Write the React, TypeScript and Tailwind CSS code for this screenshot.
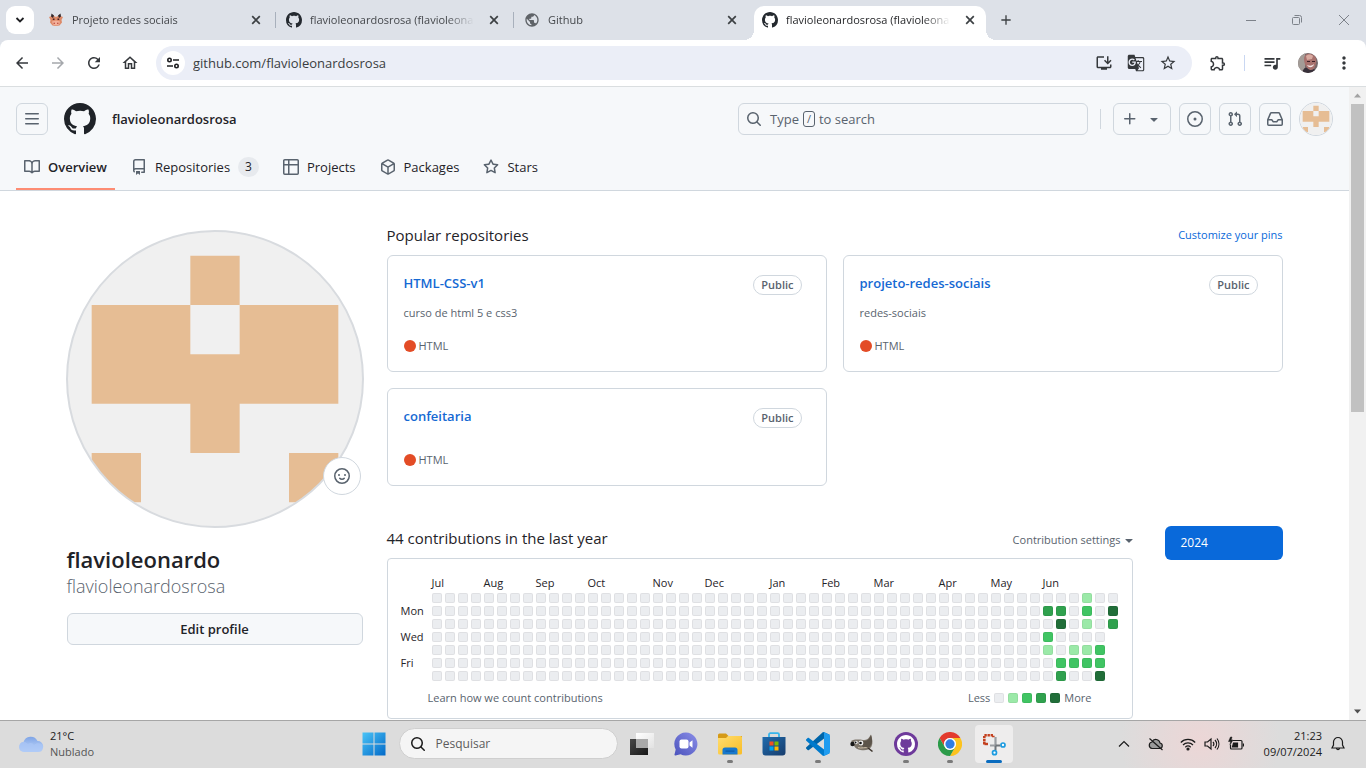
import type { ReactNode } from 'react';
import {
  MdAdd,
  MdArrowBack,
  MdArrowForward,
  MdGTranslate,
  MdMoreVert,
  MdOutlineExtension,
  MdOutlineHome,
  MdOutlineInstallDesktop,
  MdPublic,
  MdQueueMusic,
  MdRefresh,
  MdStarOutline,
} from 'react-icons/md';

/* ---------- Icons ---------- */

const iconPaths = {
  mark: 'M8 0c4.42 0 8 3.58 8 8a8.013 8.013 0 0 1-5.45 7.59c-.4.08-.55-.17-.55-.38 0-.27.01-1.13.01-2.2 0-.75-.25-1.23-.54-1.48 1.78-.2 3.65-.88 3.65-3.95 0-.88-.31-1.59-.82-2.15.08-.2.36-1.02-.08-2.12 0 0-.67-.22-2.2.82-.64-.18-1.32-.27-2-.27-.68 0-1.36.09-2 .27-1.53-1.03-2.2-.82-2.2-.82-.44 1.1-.16 1.92-.08 2.12-.51.56-.82 1.28-.82 2.15 0 3.06 1.86 3.75 3.64 3.95-.23.2-.44.55-.51 1.07-.46.21-1.61.55-2.33-.66-.15-.24-.6-.83-1.23-.82-.67.01-.27.38.01.53.34.19.73.9.82 1.13.16.45.68 1.31 2.69.94 0 .67.01 1.3.01 1.49 0 .21-.15.45-.55.38A7.995 7.995 0 0 1 0 8c0-4.42 3.58-8 8-8Z',
  bars: 'M1 2.75A.75.75 0 0 1 1.75 2h12.5a.75.75 0 0 1 0 1.5H1.75A.75.75 0 0 1 1 2.75Zm0 5A.75.75 0 0 1 1.75 7h12.5a.75.75 0 0 1 0 1.5H1.75A.75.75 0 0 1 1 7.75ZM1.75 12h12.5a.75.75 0 0 1 0 1.5H1.75a.75.75 0 0 1 0-1.5Z',
  book: 'M0 1.75A.75.75 0 0 1 .75 1h4.253c1.227 0 2.317.59 3 1.501A3.743 3.743 0 0 1 11.006 1h4.245a.75.75 0 0 1 .75.75v10.5a.75.75 0 0 1-.75.75h-4.507a2.25 2.25 0 0 0-1.591.659l-.622.621a.75.75 0 0 1-1.06 0l-.622-.621A2.25 2.25 0 0 0 5.258 13H.75a.75.75 0 0 1-.75-.75Zm7.251 10.324.004-5.073-.002-2.253A2.25 2.25 0 0 0 5.003 2.5H1.5v9h3.757a3.75 3.75 0 0 1 1.994.574ZM8.755 4.75l-.004 7.322a3.752 3.752 0 0 1 1.992-.572H14.5v-9h-3.495a2.25 2.25 0 0 0-2.25 2.25Z',
  repo: 'M2 2.5A2.5 2.5 0 0 1 4.5 0h8.75a.75.75 0 0 1 .75.75v12.5a.75.75 0 0 1-.75.75h-2.5a.75.75 0 0 1 0-1.5h1.75v-2h-8a1 1 0 0 0-.714 1.7.75.75 0 1 1-1.072 1.05A2.495 2.495 0 0 1 2 11.5Zm10.5-1h-8a1 1 0 0 0-1 1v6.708A2.486 2.486 0 0 1 4.5 9h8ZM5 12.25a.25.25 0 0 1 .25-.25h3.5a.25.25 0 0 1 .25.25v3.25a.25.25 0 0 1-.4.2l-1.45-1.087a.249.249 0 0 0-.3 0L5.4 15.7a.25.25 0 0 1-.4-.2Z',
  table: 'M0 1.75C0 .784.784 0 1.75 0h12.5C15.216 0 16 .784 16 1.75v12.5A1.75 1.75 0 0 1 14.25 16H1.75A1.75 1.75 0 0 1 0 14.25ZM6.5 6.5v8h7.75a.25.25 0 0 0 .25-.25V6.5Zm8-1.5V1.75a.25.25 0 0 0-.25-.25H6.5V5Zm-13 1.5v7.75c0 .138.112.25.25.25H5v-8ZM5 5V1.5H1.75a.25.25 0 0 0-.25.25V5Z',
  package: 'm8.878.392 5.25 3.045c.54.314.872.89.872 1.514v6.098a1.75 1.75 0 0 1-.872 1.514l-5.25 3.045a1.75 1.75 0 0 1-1.756 0l-5.25-3.045A1.75 1.75 0 0 1 1 11.049V4.951c0-.624.332-1.201.872-1.514L7.122.392a1.75 1.75 0 0 1 1.756 0ZM7.875 1.69l-4.63 2.685L8 7.133l4.755-2.758-4.63-2.685a.248.248 0 0 0-.25 0ZM2.5 5.677v5.372c0 .09.047.171.125.216l4.625 2.683V8.432Zm6.25 8.271 4.625-2.683a.25.25 0 0 0 .125-.216V5.677L8.75 8.432Z',
  star: 'M8 .25a.75.75 0 0 1 .673.418l1.882 3.815 4.21.612a.75.75 0 0 1 .416 1.279l-3.046 2.97.719 4.192a.751.751 0 0 1-1.088.791L8 12.347l-3.766 1.98a.75.75 0 0 1-1.088-.79l.72-4.194L.818 6.374a.75.75 0 0 1 .416-1.28l4.21-.611L7.327.668A.75.75 0 0 1 8 .25Zm0 2.445L6.615 5.5a.75.75 0 0 1-.564.41l-3.097.45 2.24 2.184a.75.75 0 0 1 .216.664l-.528 3.084 2.769-1.456a.75.75 0 0 1 .698 0l2.77 1.456-.53-3.084a.75.75 0 0 1 .216-.664l2.24-2.183-3.096-.45a.75.75 0 0 1-.564-.41L8 2.694Z',
  search: 'M10.68 11.74a6 6 0 0 1-7.922-8.982 6 6 0 0 1 8.982 7.922l3.04 3.04a.749.749 0 0 1-.326 1.275.749.749 0 0 1-.734-.215ZM11.5 7a4.499 4.499 0 1 0-8.997 0A4.499 4.499 0 0 0 11.5 7Z',
  plus: 'M7.75 2a.75.75 0 0 1 .75.75V7h4.25a.75.75 0 0 1 0 1.5H8.5v4.25a.75.75 0 0 1-1.5 0V8.5H2.75a.75.75 0 0 1 0-1.5H7V2.75A.75.75 0 0 1 7.75 2Z',
  caret: 'M4.427 7.427l3.396 3.396a.25.25 0 0 0 .354 0l3.396-3.396A.25.25 0 0 0 11.396 7H4.604a.25.25 0 0 0-.177.427Z',
  issue: 'M8 9.5a1.5 1.5 0 1 0 0-3 1.5 1.5 0 0 0 0 3ZM8 0a8 8 0 1 1 0 16A8 8 0 0 1 8 0ZM1.5 8a6.5 6.5 0 1 0 13 0 6.5 6.5 0 0 0-13 0Z',
  pull: 'M1.5 3.25a2.25 2.25 0 1 1 3 2.122v5.256a2.251 2.251 0 1 1-1.5 0V5.372A2.25 2.25 0 0 1 1.5 3.25Zm5.677-.177L9.573.677A.25.25 0 0 1 10 .854V2.5h1A2.5 2.5 0 0 1 13.5 5v5.628a2.251 2.251 0 1 1-1.5 0V5a1 1 0 0 0-1-1h-1v1.646a.25.25 0 0 1-.427.177L7.177 3.427a.25.25 0 0 1 0-.354ZM3.75 2.5a.75.75 0 1 0 0 1.5.75.75 0 0 0 0-1.5Zm0 9.5a.75.75 0 1 0 0 1.5.75.75 0 0 0 0-1.5Zm8.25.75a.75.75 0 1 0 1.5 0 .75.75 0 0 0-1.5 0Z',
  inbox: 'M2.8 2.06A1.75 1.75 0 0 1 4.41 1h7.18c.7 0 1.333.417 1.61 1.06l2.74 6.395c.04.093.06.194.06.295v4.5A1.75 1.75 0 0 1 14.25 15H1.75A1.75 1.75 0 0 1 0 13.25v-4.5c0-.101.02-.202.06-.295Zm1.61.44a.25.25 0 0 0-.23.152L1.887 8H4.75a.75.75 0 0 1 .6.3L6.625 10h2.75l1.275-1.7a.75.75 0 0 1 .6-.3h2.863L11.82 2.652a.25.25 0 0 0-.23-.152Zm10.09 7h-2.875l-1.275 1.7a.75.75 0 0 1-.6.3h-3.5a.75.75 0 0 1-.6-.3L4.375 9.5H1.5v3.75c0 .138.112.25.25.25h12.5a.25.25 0 0 0 .25-.25Z',
};

type IconName = keyof typeof iconPaths;

function Icon({ name, className = 'size-4' }: { name: IconName; className?: string }) {
  return (
    <svg viewBox="0 0 16 16" className={className} fill="currentColor" aria-hidden="true">
      <path d={iconPaths[name]} />
    </svg>
  );
}

function SmileyIcon() {
  return (
    <svg viewBox="0 0 16 16" className="size-4" fill="none" stroke="currentColor" strokeWidth="1.5" strokeLinecap="round" aria-hidden="true">
      <circle cx="8" cy="8" r="7.25" />
      <path d="M5.75 10.25c1 1.350 3.500 1.350 4.500 0" />
      <circle cx="5" cy="7" r="1" fill="currentColor" stroke="none" />
      <circle cx="11" cy="7" r="1" fill="currentColor" stroke="none" />
    </svg>
  );
}

/* ---------- Browser ---------- */

function BullIcon() {
  return (
    <svg viewBox="0 0 16 16" className="size-4" aria-hidden="true">
      <path d="M1 5l4-1.500L8 5l3-1.500L15 5l-1.500 3 .5 2.500-2.500 3L8 14l-3.500-.5L2 10.500 2.500 8z" fill="#dd8a68" />
      <path d="M4 9.500l4-1 4 1-1 3-3 1-3-1z" fill="#f3b09a" />
      <path d="M3.500 1.500l2.500 2L5 6 3 4.500zM12.500 1.500l-2.500 2L11 6l2-1.500z" fill="#33272a" />
      <path d="M4.800 6.500h1.700V8H4.800zM9.500 6.500h1.700V8H9.500z" fill="#4a2020" />
      <path d="M5.500 10.800h1.500v1H5.500zM9 10.800h1.500v1H9z" fill="#b5392f" />
    </svg>
  );
}

type TabInfo = { title: string; icon: ReactNode; active?: boolean; divider?: boolean };

const tabs: TabInfo[] = [
  { title: 'Projeto redes sociais', icon: <BullIcon />, divider: true },
  {
    title: 'flavioleonardosrosa (flavioleona',
    icon: <Icon name="mark" className="size-4 text-[#24292f]" />,
    divider: true,
  },
  { title: 'Github', icon: <MdPublic className="size-4 text-[#5f6368]" /> },
  {
    title: 'flavioleonardosrosa (flavioleona',
    icon: <Icon name="mark" className="size-4 text-[#24292f]" />,
    active: true,
  },
];

function Tab({ tab }: { tab: TabInfo }) {
  const look = tab.active
    ? 'bg-white text-[#1f2023] before:absolute before:bottom-0 before:-left-2.5 before:size-2.5 before:bg-[radial-gradient(circle_at_0_0,transparent_10px,#fff_10px)] after:absolute after:bottom-0 after:-right-2.5 after:size-2.5 after:bg-[radial-gradient(circle_at_100%_0,transparent_10px,#fff_10px)]'
    : 'text-[#44474b]';
  return (
    <div className={`relative mr-1.5 flex h-[34px] w-[232px] items-center gap-2 rounded-t-[10px] pr-[11px] pb-1.5 pl-2 ${look}`}>
      {tab.icon}
      <span className="min-w-0 flex-1 overflow-hidden text-[11px] leading-4 whitespace-nowrap [mask-image:linear-gradient(to_right,#000_80%,transparent_96%)]">
        {tab.title}
      </span>
      <button aria-label="Fechar guia" className="text-[#3c4043]">
        <svg viewBox="0 0 10 10" className="size-2.5" stroke="currentColor" strokeWidth="1.7" fill="none"><path d="M1.200 1.200l7.600 7.600M8.800 1.200L1.200 8.800" /></svg>
      </button>
      {tab.divider && <span className="absolute top-1.5 -right-1 h-4 w-px bg-[#a8b0bc]" />}
    </div>
  );
}

function TabStrip() {
  return (
    <div className="flex h-10 shrink-0 items-end bg-[#dde1e8]">
      <button aria-label="Pesquisar guias" className="mr-1.5 mb-1.5 ml-1.5 flex size-7 items-center justify-center rounded-[9px] bg-white">
        <svg viewBox="0 0 10 10" className="size-2.5" stroke="#1f2023" strokeWidth="1.8" fill="none"><path d="M1.500 3l3.500 3.500L8.500 3" /></svg>
      </button>
      {tabs.map((tab, i) => (
        <Tab key={i} tab={tab} />
      ))}
      <button aria-label="Nova guia" className="mb-3 ml-1.5 text-[#3c4043]">
        <MdAdd className="size-4" />
      </button>
      <div className="mr-4 mb-3.5 ml-auto flex items-center gap-9 text-[#7d828a]">
        <button aria-label="Minimizar">
          <svg viewBox="0 0 10 10" className="size-2.5" stroke="currentColor" fill="none"><path d="M0 5.500h10" /></svg>
        </button>
        <button aria-label="Restaurar">
          <svg viewBox="0 0 10 10" className="size-2.5" stroke="currentColor" fill="none"><rect x=".5" y="2.5" width="7" height="7" rx="1" /><path d="M2.500.5h5a2 2 0 0 1 2 2v5" /></svg>
        </button>
        <button aria-label="Fechar">
          <svg viewBox="0 0 12 12" className="size-3" stroke="currentColor" fill="none"><path d="M1 1l10 10M11 1L1 11" /></svg>
        </button>
      </div>
    </div>
  );
}

function SiteSettingsIcon() {
  return (
    <svg viewBox="0 0 14 14" className="size-3.5" fill="none" stroke="#1f2023" strokeWidth="1.6" aria-hidden="true">
      <circle cx="3.5" cy="4" r="1.7" />
      <path d="M7 4h6M1 10h6" />
      <circle cx="10.5" cy="10" r="1.7" />
    </svg>
  );
}

function ProfilePhoto() {
  return (
    <svg viewBox="0 0 20 20" className="size-5 rounded-full" aria-hidden="true">
      <rect width="20" height="20" fill="#75686a" />
      <path d="M0 0h7v20H0z" fill="#a39c97" />
      <path d="M6 6c0-4 3-6 7-5s6 4 5 9-3 8-6 7-6-6-6-11z" fill="#a8716d" />
      <path d="M8 3c2-2 5-2 7 0l-1 3-5 1z" fill="#d8aaa0" />
      <path d="M9 8h3v1H9zM14 8h3v1h-3z" fill="#3d2027" />
      <path d="M9 12c3 1 5 1 7-1 0 3-5 5-7 1z" fill="#f2e6e4" />
      <path d="M4 20c1-4 3-6 5-5 3 3 5 2 7 1l4 4z" fill="#38303a" />
    </svg>
  );
}

function Toolbar() {
  return (
    <div className="shrink-0 bg-[#dde1e8]">
      <div className="flex h-[47px] items-center rounded-t-lg border-b border-[#dadee0] bg-white text-[#35383c]">
        <div className="flex items-center gap-[18px] pr-[17px] pl-[13px]">
          <button aria-label="Voltar"><MdArrowBack className="size-[18px]" /></button>
          <button aria-label="Avançar" className="text-[#a5a8ac]"><MdArrowForward className="size-[18px]" /></button>
          <button aria-label="Recarregar"><MdRefresh className="size-[18px]" /></button>
          <button aria-label="Página inicial"><MdOutlineHome className="size-[18px]" /></button>
        </div>
        <div className="flex h-[34px] flex-1 items-center rounded-full bg-[#ebeef7] pr-[15px] pl-[5px]">
          <button aria-label="Ver informações do site" className="flex size-6 items-center justify-center rounded-full bg-white">
            <SiteSettingsIcon />
          </button>
          <input
            aria-label="Barra de endereço"
            defaultValue="github.com/flavioleonardosrosa"
            className="ml-2 min-w-0 flex-1 bg-transparent text-[13px] leading-5 text-[#3a3d41] outline-none"
          />
          <div className="flex items-center gap-[14px]">
            <button aria-label="Instalar"><MdOutlineInstallDesktop className="size-[18px]" /></button>
            <button aria-label="Traduzir"><MdGTranslate className="size-[18px]" /></button>
            <button aria-label="Favoritar"><MdStarOutline className="size-[18px]" /></button>
          </div>
        </div>
        <div className="flex items-center pr-3 pl-[17px]">
          <button aria-label="Extensões"><MdOutlineExtension className="size-[18px]" /></button>
          <span className="mx-[17px] h-4 w-px bg-[#c9d7f2]" />
          <button aria-label="Mídia"><MdQueueMusic className="size-5" /></button>
          <button aria-label="Perfil" className="ml-4"><ProfilePhoto /></button>
          <button aria-label="Menu" className="ml-4"><MdMoreVert className="size-5" /></button>
        </div>
      </div>
    </div>
  );
}

/* ---------- GitHub ---------- */

function Identicon({ className }: { className: string }) {
  return (
    <svg viewBox="0 0 420 420" className={className} role="img" aria-label="flavioleonardosrosa">
      <rect width="420" height="420" fill="#f0f0f0" />
      <path
        fill="#e6bd94"
        d="M175 35h70v70h-70zM35 105h140v70h70v-70h140v140H245v70h-70v-70H35zM35 315h70v70H35zM315 315h70v70h-70z"
      />
    </svg>
  );
}

const iconButton = 'flex size-8 items-center justify-center rounded-md border border-[#d0d7de] text-[#59636e]';

type NavItem = { label: string; icon: IconName; active?: boolean; count?: number };

const navItems: NavItem[] = [
  { label: 'Overview', icon: 'book', active: true },
  { label: 'Repositories', icon: 'repo', count: 3 },
  { label: 'Projects', icon: 'table' },
  { label: 'Packages', icon: 'package' },
  { label: 'Stars', icon: 'star' },
];

function SiteHeader() {
  return (
    <header className="border-b border-[#d0d7de] bg-[#f6f8fa]">
      <div className="flex items-center px-4 pt-[15px]">
        <button aria-label="Open menu" className={iconButton}><Icon name="bars" /></button>
        <Icon name="mark" className="ml-4 size-8 text-[#1f2328]" />
        <a href="#profile" className="ml-4 text-[13px] leading-5 font-semibold text-[#1f2328]">flavioleonardosrosa</a>
        <button className="ml-auto flex h-8 w-[350px] items-center rounded-md border border-[#d0d7de] px-[7px] text-[13px] leading-5 text-[#59636e]">
          <Icon name="search" className="mr-2 size-4" />
          Type
          <kbd className="mx-1 flex h-4 w-3 items-center justify-center rounded-[3px] border border-[#59636e] font-[inherit] text-[11px]">/</kbd>
          to search
        </button>
        <span className="mx-3 h-5 w-px bg-[#d0d7de]" />
        <div className="flex items-center gap-2">
          <button aria-label="Create new" className="flex h-8 w-[58px] items-center justify-center gap-2 rounded-md border border-[#d0d7de] text-[#59636e]">
            <Icon name="plus" />
            <Icon name="caret" />
          </button>
          <button aria-label="Issues" className={iconButton}><Icon name="issue" /></button>
          <button aria-label="Pull requests" className={iconButton}><Icon name="pull" /></button>
          <button aria-label="Inbox" className={iconButton}><Icon name="inbox" /></button>
          <button aria-label="Account"><Identicon className="size-[34px] rounded-full border border-[#d0d7de]" /></button>
        </div>
      </div>
      <nav className="flex gap-2 px-4 pt-[15px]">
        {navItems.map(({ label, icon, active, count }) => (
          <a
            key={label}
            href={`#${label.toLowerCase()}`}
            className={`flex items-start gap-2 border-b-2 px-2 pt-1.5 pb-[11px] text-[13px] leading-5 text-[#1f2328] ${active ? 'border-[#fd8c73] font-semibold' : 'border-transparent'}`}
          >
            <Icon name={icon} className="mt-0.5 size-4 text-[#59636e]" />
            {label}
            {count && <span className="rounded-full bg-[#e7eaee] px-[7px] text-[12px] font-medium">{count}</span>}
          </a>
        ))}
      </nav>
    </header>
  );
}

function ProfileCard() {
  return (
    <aside className="w-[296px] shrink-0">
      <div className="relative">
        <Identicon className="aspect-square w-full rounded-full outline-2 -outline-offset-1 outline-[#d8dbdf]" />
        <button aria-label="Set status" className="absolute right-0.5 bottom-8 flex size-[38px] items-center justify-center rounded-full border border-[#d0d7de] bg-white text-[#59636e]">
          <SmileyIcon />
        </button>
      </div>
      <h1 className="mt-[17px]">
        <span className="block text-[22px] leading-[30px] font-semibold text-[#1f2328]">flavioleonardo</span>
        <span className="block text-[18px] leading-6 font-light text-[#59636e]">flavioleonardosrosa</span>
      </h1>
      <button className="mt-[15px] h-8 w-full rounded-md border border-[#d0d7de] bg-[#f6f8fa] text-[13px] leading-5 font-semibold text-[#1f2328]">
        Edit profile
      </button>
    </aside>
  );
}

const repos = [
  { name: 'HTML-CSS-v1', description: 'curso de html 5 e css3' },
  { name: 'projeto-redes-sociais', description: 'redes-sociais' },
  { name: 'confeitaria', description: '' },
];

function RepoCard({ name, description }: { name: string; description: string }) {
  return (
    <li className="self-start rounded-md border border-[#d0d7de] py-[17px] pr-6 pl-4">
      <div className="flex h-[22px] justify-between">
        <a href={`#${name}`} className="text-[13px] leading-5 font-semibold text-[#1569d3]">{name}</a>
        <span className="self-end rounded-full border border-[#d0d7de] px-[7px] text-[11px] leading-[18px] font-semibold text-[#59636e]">Public</span>
      </div>
      {description && <p className="mt-2.5 -mb-[7px] text-[11px] leading-4 text-[#59636e]">{description}</p>}
      <p className="mt-6 flex items-center gap-[3px] text-[11px] leading-4 text-[#59636e]">
        <span className="size-3 rounded-full bg-[#e34c26]" />
        HTML
      </p>
    </li>
  );
}

const months: [string, number][] = [
  ['Jul', 4], ['Aug', 4], ['Sep', 4], ['Oct', 5], ['Nov', 4], ['Dec', 5],
  ['Jan', 4], ['Feb', 4], ['Mar', 5], ['Apr', 4], ['May', 4], ['Jun', 6],
];

const levelColors = ['bg-[#ebedf0]', 'bg-[#9be9a8]', 'bg-[#40c463]', 'bg-[#30a14e]', 'bg-[#216e39]'];

/* Levels of the last six weeks, one row per weekday; -1 marks days to come. */
const recentWeeks = [
  [0, 0, 0, 1, 0, 0],
  [3, 3, 0, 2, 0, 4],
  [0, 4, 0, 1, 0, 3],
  [2, 0, 0, 0, 0, -1],
  [1, 0, 1, 1, 2, -1],
  [0, 2, 2, 2, 2, -1],
  [0, 3, 0, 0, 4, -1],
];
const quietWeeks = Array<number>(47).fill(0);
const dayLabels = ['', 'Mon', '', 'Wed', '', 'Fri', ''];

function Cell({ level }: { level: number }) {
  return <span className={`block size-2.5 rounded-[2px] border border-black/5 ${levelColors[level]}`} />;
}

function ContributionCalendar() {
  return (
    <div className="rounded-[4px] border border-[#d0d7de] pt-[13px] pb-3 pl-2.5">
      <table className="table-fixed border-separate border-spacing-[3px] text-[11px] leading-[10px] text-[#1f2328]">
        <colgroup>
          <col className="w-7" />
          {Array.from({ length: 53 }, (_, i) => <col key={i} className="w-2.5" />)}
        </colgroup>
        <thead>
          <tr className="h-[15px]">
            <td className="p-0" />
            {months.map(([name, span]) => (
              <th key={name} colSpan={span} className="p-0 text-left font-normal">{name}</th>
            ))}
          </tr>
        </thead>
        <tbody>
          {recentWeeks.map((recent, day) => (
            <tr key={day} className="h-2.5">
              <th className="max-w-7 p-0 text-left font-normal">{dayLabels[day]}</th>
              {[...quietWeeks, ...recent].map((level, week) => (
                <td key={week} className="p-0">{level >= 0 && <Cell level={level} />}</td>
              ))}
            </tr>
          ))}
        </tbody>
      </table>
      <div className="mt-1.5 flex justify-between pr-10 pl-[30px] text-[11px] leading-4 text-[#59636e]">
        <a href="#learn">Learn how we count contributions</a>
        <div className="flex items-center gap-1">
          Less
          {levelColors.map((_, level) => <Cell key={level} level={level} />)}
          More
        </div>
      </div>
    </div>
  );
}

function ProfilePage() {
  return (
    <main className="mx-auto flex max-w-[1280px] gap-6 px-8 pt-10">
      <ProfileCard />
      <div className="min-w-0 flex-1">
        <section>
          <div className="-mt-1 flex items-center justify-between">
            <h2 className="text-[15px] leading-4 text-[#1f2328]">Popular repositories</h2>
            <a href="#pins" className="text-[11px] leading-4 text-[#0969da]">Customize your pins</a>
          </div>
          <ol className="mt-3 grid grid-cols-2 gap-4">
            {repos.map((repo) => <RepoCard key={repo.name} {...repo} />)}
          </ol>
        </section>
        <div className="mt-10 flex items-start gap-8">
          <section className="min-w-0 flex-1">
            <div className="mb-2 flex items-end justify-between">
              <h2 className="text-[15px] leading-6 text-[#1f2328]">44 contributions in the last year</h2>
              <button className="flex items-center text-[11px] leading-5 text-[#59636e]">
                Contribution settings
                <Icon name="caret" className="-mr-1 size-4" />
              </button>
            </div>
            <ContributionCalendar />
          </section>
          <a href="#2024" className="w-[118px] rounded-md bg-[#0969da] px-4 py-2 text-[12px] leading-[18px] text-white">2024</a>
        </div>
      </div>
    </main>
  );
}

function Scrollbar() {
  return (
    <div className="flex w-[17px] shrink-0 flex-col items-center bg-[#f1f1f1]" aria-hidden="true">
      <svg viewBox="0 0 17 17" className="size-[17px] shrink-0"><path d="M5 10.500l3.500-4 3.500 4z" fill="#a3a3a3" /></svg>
      <div className="h-[308px] w-[13px] bg-[#c1c1c1]" />
      <svg viewBox="0 0 17 17" className="mt-auto size-[17px] shrink-0"><path d="M5 6.500l3.500 4 3.500-4z" fill="#505050" /></svg>
    </div>
  );
}

/* ---------- Taskbar ---------- */

function CloudIcon() {
  return (
    <svg viewBox="0 0 26 18" className="h-[18px] w-[26px]" aria-hidden="true">
      <defs>
        <linearGradient id="cloud" x1="0" y1="0" x2="0" y2="1">
          <stop offset="0" stopColor="#7ea4e6" />
          <stop offset="1" stopColor="#c6dbfb" />
        </linearGradient>
      </defs>
      <path d="M6 17a5 5 0 0 1-.5-9.900A7.500 7.500 0 0 1 19.500 6 5.500 5.500 0 0 1 20 17z" fill="url(#cloud)" />
      <path d="M6 17a5 5 0 1 1 4-8c2-2 5-1 6 1 3-3 9-2 9 2.500a5 5 0 0 1-5 4.500z" fill="#a9c5f5" opacity=".75" />
    </svg>
  );
}

function WindowsIcon() {
  return (
    <svg viewBox="0 0 24 24" className="size-6" aria-hidden="true">
      <defs>
        <linearGradient id="win" gradientUnits="userSpaceOnUse" x1="0" y1="0" x2="24" y2="24">
          <stop offset="0" stopColor="#4cc6f8" />
          <stop offset="1" stopColor="#0067c7" />
        </linearGradient>
      </defs>
      <path d="M.5.5h11v11H.5zM12.500.5h11v11h-11zM.5 12.500h11v11H.5zM12.500 12.500h11v11h-11z" fill="url(#win)" />
    </svg>
  );
}

function TaskViewIcon() {
  return (
    <svg viewBox="0 0 24 24" className="size-6">
      <defs>
        <linearGradient id="tvDark" x1="0" y1="0" x2="1" y2="1"><stop offset="0" stopColor="#484848" /><stop offset="1" stopColor="#181818" /></linearGradient>
        <linearGradient id="tvLight" x1="0" y1="0" x2="1" y2="1"><stop offset="0" stopColor="#fff" /><stop offset="1" stopColor="#e2e2e2" /></linearGradient>
      </defs>
      <path d="M0 7h18v16H0z" fill="url(#tvDark)" />
      <path d="M6 1h18v15H6z" fill="url(#tvLight)" />
      <path d="M6 7h12v9H6z" fill="#a9a9a9" />
    </svg>
  );
}

function ChatIcon() {
  return (
    <svg viewBox="0 0 24 24" className="size-6">
      <defs>
        <linearGradient id="chat" x1="0" y1="1" x2="1" y2="0"><stop offset="0" stopColor="#4b53bc" /><stop offset="1" stopColor="#8b8ee8" /></linearGradient>
      </defs>
      <path d="M12 .5A11.500 11.500 0 1 1 6.600 22.200L1.500 23.500c-.7.2-1.200-.5-1-1.100l1.200-4.900A11.500 11.500 0 0 1 12 .5z" fill="url(#chat)" />
      <rect x="5.5" y="7.5" width="9" height="9" rx="2" fill="#fff" />
      <path d="M15.500 10.500l3-2.300v7.600l-3-2.300z" fill="#fff" />
    </svg>
  );
}

function FolderIcon() {
  return (
    <svg viewBox="0 0 24 24" className="size-6">
      <defs>
        <linearGradient id="folder" x1="0" y1="0" x2="1" y2="1"><stop offset="0" stopColor="#ffdd6f" /><stop offset="1" stopColor="#f9bd26" /></linearGradient>
      </defs>
      <path d="M0 3a1.500 1.500 0 0 1 1.500-1.500H8l2.500 2.500H24v4H0z" fill="#d59a17" />
      <path d="M0 6h8l2-2h12.500A1.500 1.500 0 0 1 24 5.500V21a1.500 1.500 0 0 1-1.500 1.500h-21A1.500 1.500 0 0 1 0 21z" fill="url(#folder)" />
      <path d="M4.500 22.500V18A2.500 2.500 0 0 1 7 15.500h10a2.500 2.500 0 0 1 2.500 2.500v4.500z" fill="#1878cc" />
      <path d="M7.500 18.500h9v1.200h-9z" fill="#0c5aa6" />
    </svg>
  );
}

function StoreIcon() {
  return (
    <svg viewBox="0 0 24 24" className="size-6">
      <defs>
        <linearGradient id="store" x1="0" y1="0" x2="1" y2="1"><stop offset="0" stopColor="#1f6cae" /><stop offset="1" stopColor="#173c6c" /></linearGradient>
      </defs>
      <path d="M7 6V2.500A1.300 1.300 0 0 1 8.300 1.200h7.400A1.300 1.300 0 0 1 17 2.500V6" fill="none" stroke="#36b5ec" strokeWidth="1.8" />
      <path d="M.5 5h23v15.500a3 3 0 0 1-3 3h-17a3 3 0 0 1-3-3z" fill="url(#store)" />
      <path d="M7.500 9.500h4v4h-4z" fill="#f25022" /><path d="M12.500 9.500h4v4h-4z" fill="#7fba00" />
      <path d="M7.500 14.500h4v4h-4z" fill="#00a4ef" /><path d="M12.500 14.500h4v4h-4z" fill="#ffb900" />
    </svg>
  );
}

function CodeIcon() {
  return (
    <svg viewBox="0 0 100 100" className="size-6">
      <path fill="#0065a9" d="M96.461 10.796L75.857.876C73.472-.273 70.622.212 68.750 2.083L1.299 63.583c-1.815 1.654-1.813 4.511.004 6.162l5.510 5.009c1.485 1.350 3.722 1.450 5.321.237L93.361 13.370C96.086 11.303 100 13.246 100 16.667v-.24c0-2.400-1.375-4.589-3.539-5.631z" />
      <path fill="#007acc" d="M96.461 89.204l-20.604 9.920c-2.385 1.149-5.235.664-7.107-1.207L1.299 36.417c-1.815-1.654-1.813-4.511.004-6.162l5.510-5.009c1.485-1.350 3.722-1.450 5.321-.237L93.361 86.630C96.086 88.697 100 86.754 100 83.333v.24c0 2.400-1.375 4.589-3.539 5.631z" />
      <path fill="#1f9cf0" d="M75.858 99.126c-2.386 1.148-5.236.662-7.108-1.210C71.056 100.223 75 98.590 75 95.328V4.672C75 1.410 71.056-.223 68.750 2.083 70.622.211 73.472-.274 75.858.874l20.601 9.907C98.623 11.822 100 14.011 100 16.413v67.174c0 2.402-1.377 4.592-3.541 5.633z" />
    </svg>
  );
}

function GimpIcon() {
  return (
    <svg viewBox="0 0 24 24" className="size-6">
      <path d="M1 9c2-1.500 4-1.500 6-1.500 3 0 4 0 6 .5 3 .5 5-1 6-2.500l2-3c1.500 5 2 9 .5 12-2 4-7 4-11 3.500-3-.5-5-1.500-6-3.500z" fill="#7d756a" />
      <path d="M13 9c3 .5 5-1 6.500-3l1.500-3c1.500 5 1.500 8-.5 11-2 2.500-6 2.500-8 1z" fill="#5c544a" />
      <circle cx="2.5" cy="12" r="2.2" fill="#171717" />
      <circle cx="6" cy="10.5" r="1.8" fill="#eee" /><circle cx="11" cy="11" r="2.4" fill="#eee" />
      <circle cx="5.6" cy="10.5" r=".9" fill="#111" /><circle cx="10.5" cy="11" r="1.3" fill="#111" />
      <path d="M8 15.500c3 1.500 8-1 11 .5" stroke="#c9bba5" fill="none" />
      <path d="M18 15l5 4-1 1-5-4z" fill="#3d352d" />
    </svg>
  );
}

function GithubDesktopIcon() {
  return (
    <span className="flex size-6 items-center justify-center rounded-full bg-[#6e3a9b] text-white">
      <Icon name="mark" className="size-[18px]" />
    </span>
  );
}

function ChromeIcon() {
  return (
    <svg viewBox="0 0 48 48" className="size-6">
      <path d="M3.200 12A24 24 0 0 1 44.800 12H24A12 12 0 0 0 13.600 30z" fill="#e33b2e" />
      <path d="M44.800 12A24 24 0 0 1 24 48l10.400-18A12 12 0 0 0 24 12z" fill="#fcc31e" />
      <path d="M24 48A24 24 0 0 1 3.200 12l10.400 18a12 12 0 0 0 20.800 0z" fill="#2b9b49" />
      <circle cx="24" cy="24" r="12" fill="#fff" />
      <circle cx="24" cy="24" r="9.3" fill="#2f7de1" />
    </svg>
  );
}

function SnipIcon() {
  return (
    <svg viewBox="0 0 24 24" className="size-6" fill="none">
      <path d="M2.300 12.500V3.300h9v2" stroke="#c3411f" strokeWidth="2.6" strokeDasharray="2.4 .7" />
      <path d="M2.500 12H6" stroke="#c3411f" strokeWidth="2.4" />
      <path d="M13.500 5v9.500M8 13.500h6" stroke="#9a9da1" strokeWidth="2.2" />
      <path d="M13.500 13.500h5M13.500 14v4.500" stroke="#6f7479" strokeWidth="2" />
      <circle cx="21" cy="13" r="2" fill="#fff" stroke="#1c9be0" strokeWidth="1.7" />
      <circle cx="12.5" cy="20.7" r="2" fill="#fff" stroke="#1c9be0" strokeWidth="1.7" />
    </svg>
  );
}

const apps = [
  { name: 'Visão de tarefas', AppIcon: TaskViewIcon, running: false },
  { name: 'Chat', AppIcon: ChatIcon, running: false },
  { name: 'Explorador de Arquivos', AppIcon: FolderIcon, running: true },
  { name: 'Microsoft Store', AppIcon: StoreIcon, running: false },
  { name: 'Visual Studio Code', AppIcon: CodeIcon, running: true },
  { name: 'GIMP', AppIcon: GimpIcon, running: false },
  { name: 'GitHub Desktop', AppIcon: GithubDesktopIcon, running: true },
  { name: 'Google Chrome', AppIcon: ChromeIcon, running: true },
  { name: 'Ferramenta de Captura', AppIcon: SnipIcon, running: true, focused: true },
];

function Tray() {
  const line = { fill: 'none', stroke: '#1b1b1b', strokeWidth: 1.2 };
  return (
    <div className="flex items-center justify-end pr-5">
      <button aria-label="Mostrar ícones ocultos" className="mr-4">
        <svg viewBox="0 0 16 16" className="size-4" {...line}><path d="M3 10.500l5-5 5 5" /></svg>
      </button>
      <button aria-label="OneDrive" className="mr-4">
        <svg viewBox="0 0 16 16" className="size-4" {...line}>
          <path d="M4 12.500a3.300 3.300 0 0 1 0-6.500A4.200 4.200 0 0 1 12 7a2.800 2.800 0 0 1 0 5.500z" fill="#9a9a9a" />
          <path d="M1.500 2.500l13 11.500" />
        </svg>
      </button>
      <button aria-label="Rede, som e bateria" className="mr-5 flex gap-2">
        <svg viewBox="0 0 16 16" className="size-4" {...line}>
          <path d="M.8 6.500a10 10 0 0 1 14.400 0M3 9a7 7 0 0 1 10 0M5.300 11.200a4 4 0 0 1 5.400 0" />
          <circle cx="8" cy="13" r="1" fill="#1b1b1b" />
        </svg>
        <svg viewBox="0 0 16 16" className="size-4" {...line}>
          <path d="M1 6h2.500L7 3v10l-3.500-3H1zM9 6a3 3 0 0 1 0 4M11 4a6 6 0 0 1 0 8M13 2.500a9 9 0 0 1 0 11" />
        </svg>
        <svg viewBox="0 0 16 16" className="size-4" {...line}>
          <path d="M5 4.500h8a1 1 0 0 1 1 1v6.500a1 1 0 0 1-1 1H3.500a1 1 0 0 1-1-1V9M15.500 7.500v3" />
          <path d="M5.500 7h4v4h-5z" fill="#1b1b1b" />
          <path d="M2.500 1L.5 5.500h2L2 9l3-5H3.200L4 1z" fill="#1b1b1b" strokeWidth=".5" />
        </svg>
      </button>
      <p className="mr-2 text-right text-[11px] leading-4 text-[#1b1b1b]">21:23<br />09/07/2024</p>
      <button aria-label="Notificações">
        <svg viewBox="0 0 16 16" className="size-4" {...line}>
          <path d="M8 1.500a4.500 4.500 0 0 0-4.500 4.500v3L2 12h12l-1.500-3V6A4.500 4.500 0 0 0 8 1.500zM6.500 12.500a1.600 1.600 0 0 0 3 0" />
        </svg>
      </button>
    </div>
  );
}

function Taskbar() {
  return (
    <footer className="grid h-12 shrink-0 grid-cols-[1fr_auto_1fr] border-t border-[#a6a6a6] bg-[#dcdcdc] bg-[radial-gradient(circle_at_1200px_20px,#ecd6d6,transparent_80px)] pb-0.5">
      <button className="flex items-center gap-1.5 pl-[18px] text-left">
        <CloudIcon />
        <span className="text-[11px] leading-4 text-[#1b1b1b]">21°C<span className="block text-[#555]">Nublado</span></span>
      </button>
      <div className="flex items-center pl-[11px]">
        <button aria-label="Iniciar"><WindowsIcon /></button>
        <label className="mr-0.5 ml-[13px] flex h-[31px] w-[219px] items-center gap-2.5 rounded-full border border-[#cfcfcf] bg-[#f5f5f5] pl-2.5 text-[#1b1b1b]">
          <Icon name="search" />
          <input aria-label="Pesquisar" placeholder="Pesquisar" className="w-40 bg-transparent text-[12px] outline-none placeholder:text-[#5c5c5c]" />
        </label>
        {apps.map(({ name, AppIcon, running, focused }) => (
          <button key={name} aria-label={name} className="flex h-full w-11 items-center justify-center">
            <span className={`relative flex size-[38px] items-center justify-center rounded-[4px] ${focused ? 'bg-[#eeeded]' : ''}`}>
              <AppIcon />
              {running && (
                <span className={`absolute bottom-0 h-[3px] rounded-full ${focused ? 'w-4 bg-[#0a6cbf]' : 'w-1.5 bg-[#7a7a7a]'}`} />
              )}
            </span>
          </button>
        ))}
      </div>
      <Tray />
    </footer>
  );
}

export default function App() {
  return (
    <div className="flex h-screen flex-col overflow-hidden bg-white font-['Open_Sans','Noto_Sans',sans-serif]">
      <TabStrip />
      <Toolbar />
      <div className="flex min-h-0 flex-1">
        <div className="min-w-0 flex-1 overflow-hidden">
          <SiteHeader />
          <ProfilePage />
        </div>
        <Scrollbar />
      </div>
      <Taskbar />
    </div>
  );
}
